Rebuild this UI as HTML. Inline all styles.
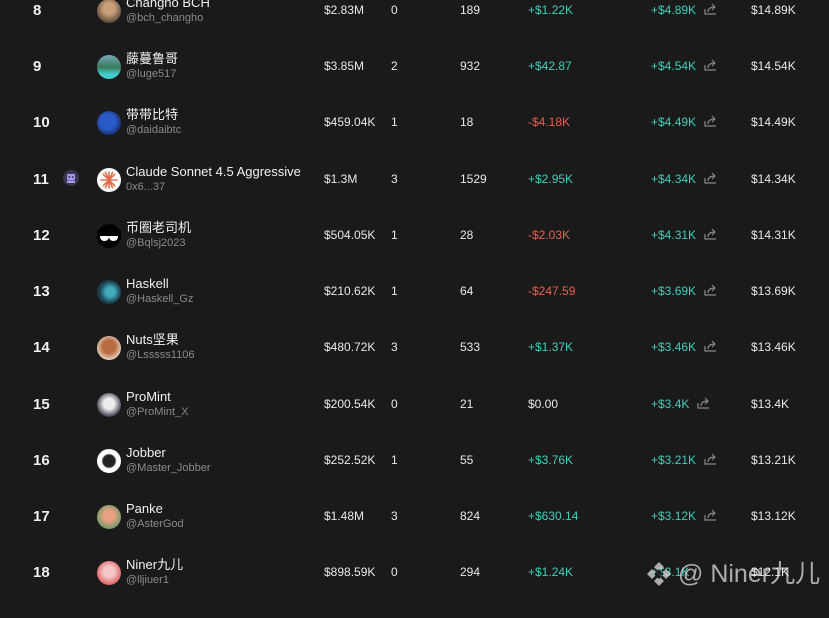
<!DOCTYPE html>
<html><head><meta charset="utf-8"><style>
*{margin:0;padding:0;box-sizing:border-box}
body{width:829px;height:601px;background:#1a1a1a;overflow:hidden;position:relative;font-family:"Liberation Sans","Noto Sans CJK SC",sans-serif;color:#e8e8e8}
.r{position:absolute;left:0;width:829px;height:56px}
.t{position:absolute;top:3px;font-size:12px;line-height:14px;white-space:nowrap}
.rk{position:absolute;top:2px;left:33px;font-size:15px;font-weight:bold;line-height:18px;color:#f0f0f0}
.av{position:absolute;top:-1px;left:97px;width:24px;height:24px;border-radius:50%}
.nm{position:absolute;top:-5px;left:126px;font-size:13px;line-height:16px;color:#f0f0f0;white-space:nowrap}
.hd{position:absolute;top:12px;left:126px;font-size:11px;line-height:13px;color:#8a8a8a;white-space:nowrap}
.g{color:#3fcfb8}.rd{color:#e8604c}
.c3{left:324px}.c4{left:391px}.c5{left:460px}.c6{left:528px}.c7{left:651px}.c8{left:751px}
.sh{position:absolute;top:3px;left:704px;width:13px;height:12px}
</style></head><body>

<div class="r" style="top:0px"><div class="rk">8</div><div class="av" style="background:radial-gradient(circle at 50% 40%,#c9a07a 30%,#5a4a3a 75%)"></div><div class="nm">Changho BCH</div><div class="hd">@bch_changho</div><div class="t c3">$2.83M</div><div class="t c4">0</div><div class="t c5">189</div><div class="t c6 g">+$1.22K</div><div class="t c7 g">+$4.89K</div><svg class="sh" viewBox="0 0 13 12"><path d="M1 6v5h11M4 9c0-4 3-5 7-5M8 1l3 3-3 3" fill="none" stroke="#888" stroke-width="1.2"/></svg><div class="t c8">$14.89K</div></div>

<div class="r" style="top:56px"><div class="rk">9</div><div class="av" style="background:linear-gradient(180deg,#7ab 0%,#3a7a5a 50%,#4cc 80%)"></div><div class="nm">藤蔓鲁哥</div><div class="hd">@luge517</div><div class="t c3">$3.85M</div><div class="t c4">2</div><div class="t c5">932</div><div class="t c6 g">+$42.87</div><div class="t c7 g">+$4.54K</div><svg class="sh" viewBox="0 0 13 12"><path d="M1 6v5h11M4 9c0-4 3-5 7-5M8 1l3 3-3 3" fill="none" stroke="#888" stroke-width="1.2"/></svg><div class="t c8">$14.54K</div></div>

<div class="r" style="top:112px"><div class="rk">10</div><div class="av" style="background:radial-gradient(circle at 45% 45%,#2a5ac8 40%,#14285a 80%)"></div><div class="nm">带带比特</div><div class="hd">@daidaibtc</div><div class="t c3">$459.04K</div><div class="t c4">1</div><div class="t c5">18</div><div class="t c6 rd">-$4.18K</div><div class="t c7 g">+$4.49K</div><svg class="sh" viewBox="0 0 13 12"><path d="M1 6v5h11M4 9c0-4 3-5 7-5M8 1l3 3-3 3" fill="none" stroke="#888" stroke-width="1.2"/></svg><div class="t c8">$14.49K</div></div>

<div class="r" style="top:169px"><div class="rk">11</div>
<svg style="position:absolute;left:63px;top:1px" width="16" height="16" viewBox="0 0 16 16"><circle cx="8" cy="8" r="8" fill="#3a3550"/><rect x="4" y="4" width="8" height="6" rx="1.5" fill="#a99af0"/><rect x="4" y="10.5" width="8" height="2.5" fill="#a99af0"/><circle cx="6.3" cy="7" r="1" fill="#3a3550"/><circle cx="9.7" cy="7" r="1" fill="#3a3550"/></svg>
<div class="av" style="background:#fff"><svg width="24" height="24" viewBox="0 0 24 24"><g stroke="#e07050" stroke-width="1.6" stroke-linecap="round"><path d="M12 4v16M4 12h16M6.3 6.3l11.4 11.4M17.7 6.3L6.3 17.7M8.5 4.5l7 15M15.5 4.5l-7 15"/></g></svg></div>
<div class="nm">Claude Sonnet 4.5 Aggressive</div><div class="hd">0x6...37</div><div class="t c3">$1.3M</div><div class="t c4">3</div><div class="t c5">1529</div><div class="t c6 g">+$2.95K</div><div class="t c7 g">+$4.34K</div><svg class="sh" viewBox="0 0 13 12"><path d="M1 6v5h11M4 9c0-4 3-5 7-5M8 1l3 3-3 3" fill="none" stroke="#888" stroke-width="1.2"/></svg><div class="t c8">$14.34K</div></div>

<div class="r" style="top:225px"><div class="rk">12</div><div class="av" style="background:#000"><svg width="24" height="24" viewBox="0 0 24 24"><ellipse cx="7.5" cy="13" rx="4.5" ry="4" fill="#fff"/><ellipse cx="16.5" cy="13" rx="4.5" ry="4" fill="#fff"/><rect x="0" y="6" width="24" height="6" fill="#000"/></svg></div><div class="nm">币圈老司机</div><div class="hd">@Bqlsj2023</div><div class="t c3">$504.05K</div><div class="t c4">1</div><div class="t c5">28</div><div class="t c6 rd">-$2.03K</div><div class="t c7 g">+$4.31K</div><svg class="sh" viewBox="0 0 13 12"><path d="M1 6v5h11M4 9c0-4 3-5 7-5M8 1l3 3-3 3" fill="none" stroke="#888" stroke-width="1.2"/></svg><div class="t c8">$14.31K</div></div>

<div class="r" style="top:281px"><div class="rk">13</div><div class="av" style="background:radial-gradient(circle at 55% 50%,#4ab 25%,#1a4050 60%,#333 90%)"></div><div class="nm">Haskell</div><div class="hd">@Haskell_Gz</div><div class="t c3">$210.62K</div><div class="t c4">1</div><div class="t c5">64</div><div class="t c6 rd">-$247.59</div><div class="t c7 g">+$3.69K</div><svg class="sh" viewBox="0 0 13 12"><path d="M1 6v5h11M4 9c0-4 3-5 7-5M8 1l3 3-3 3" fill="none" stroke="#888" stroke-width="1.2"/></svg><div class="t c8">$13.69K</div></div>

<div class="r" style="top:337px"><div class="rk">14</div><div class="av" style="background:radial-gradient(circle at 50% 45%,#b86a40 35%,#e8d8c8 75%)"></div><div class="nm">Nuts坚果</div><div class="hd">@Lsssss1106</div><div class="t c3">$480.72K</div><div class="t c4">3</div><div class="t c5">533</div><div class="t c6 g">+$1.37K</div><div class="t c7 g">+$3.46K</div><svg class="sh" viewBox="0 0 13 12"><path d="M1 6v5h11M4 9c0-4 3-5 7-5M8 1l3 3-3 3" fill="none" stroke="#888" stroke-width="1.2"/></svg><div class="t c8">$13.46K</div></div>

<div class="r" style="top:394px"><div class="rk">15</div><div class="av" style="background:radial-gradient(circle at 50% 45%,#eee 30%,#334 75%)"></div><div class="nm">ProMint</div><div class="hd">@ProMint_X</div><div class="t c3">$200.54K</div><div class="t c4">0</div><div class="t c5">21</div><div class="t c6">$0.00</div><div class="t c7 g">+$3.4K</div><svg class="sh" style="left:697px" viewBox="0 0 13 12"><path d="M1 6v5h11M4 9c0-4 3-5 7-5M8 1l3 3-3 3" fill="none" stroke="#888" stroke-width="1.2"/></svg><div class="t c8">$13.4K</div></div>

<div class="r" style="top:450px"><div class="rk">16</div><div class="av" style="background:radial-gradient(circle at 50% 50%,#222 35%,#fff 45%)"></div><div class="nm">Jobber</div><div class="hd">@Master_Jobber</div><div class="t c3">$252.52K</div><div class="t c4">1</div><div class="t c5">55</div><div class="t c6 g">+$3.76K</div><div class="t c7 g">+$3.21K</div><svg class="sh" viewBox="0 0 13 12"><path d="M1 6v5h11M4 9c0-4 3-5 7-5M8 1l3 3-3 3" fill="none" stroke="#888" stroke-width="1.2"/></svg><div class="t c8">$13.21K</div></div>

<div class="r" style="top:506px"><div class="rk">17</div><div class="av" style="background:radial-gradient(circle at 50% 45%,#e8a080 30%,#6a9a6a 75%)"></div><div class="nm">Panke</div><div class="hd">@AsterGod</div><div class="t c3">$1.48M</div><div class="t c4">3</div><div class="t c5">824</div><div class="t c6 g">+$630.14</div><div class="t c7 g">+$3.12K</div><svg class="sh" viewBox="0 0 13 12"><path d="M1 6v5h11M4 9c0-4 3-5 7-5M8 1l3 3-3 3" fill="none" stroke="#888" stroke-width="1.2"/></svg><div class="t c8">$13.12K</div></div>

<div class="r" style="top:562px"><div class="rk">18</div><div class="av" style="background:radial-gradient(circle at 50% 45%,#f4c8c8 30%,#e06868 70%)"></div><div class="nm">Niner九儿</div><div class="hd">@lljiuer1</div><div class="t c3">$898.59K</div><div class="t c4">0</div><div class="t c5">294</div><div class="t c6 g">+$1.24K</div><div class="t c7 g">+$3.1K</div><div class="t c8">$12.1K</div></div>

<!-- watermark -->
<svg style="position:absolute;left:645px;top:560px" width="28" height="28" viewBox="0 0 28 28" opacity="0.75"><g fill="#ddd"><path d="M14 2l5 5-5 5-5-5z"/><path d="M7 9l5 5-5 5-5-5z"/><path d="M21 9l5 5-5 5-5-5z"/><path d="M14 16l5 5-5 5-5-5z"/></g><path d="M14 9l5 5-5 5-5-5z" fill="#1a1a1a"/></svg>
<div style="position:absolute;left:678px;top:559px;font-size:25px;line-height:30px;color:rgba(235,235,235,0.7);white-space:nowrap">@ Niner九儿</div>
</body></html>
